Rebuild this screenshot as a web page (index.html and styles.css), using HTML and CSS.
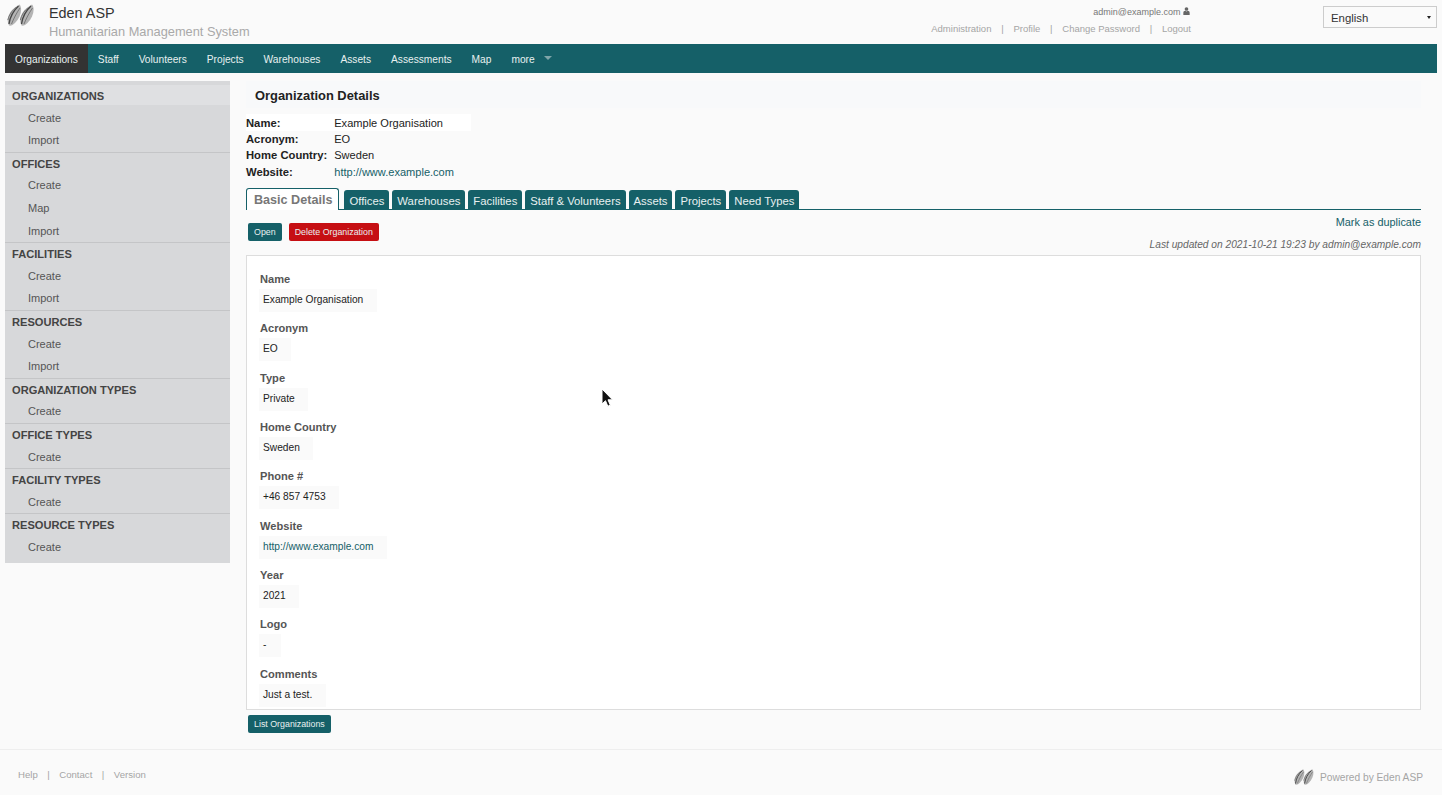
FILE: index.html
```html
<!DOCTYPE html>
<html lang="en">
<head>
    <meta charset="UTF-8">
    <meta name="viewport" content="width=device-width, initial-scale=1.0">
    <title>Eden ASP - Organization Details</title>
    <link rel="stylesheet" href="styles.css">
</head>
<body>
    <svg class="svg-defs" width="0" height="0" aria-hidden="true">
        <symbol id="eden-logo" viewBox="0 0 28 22">
            <g id="eden-leaf">
                <path d="M3 21.500C-.5 15 3 6 13.500 .5C16.500 4 15.500 12 9 19C7 21 5 22 3 21.500z" fill="#b4b4b4"/>
                <path d="M3 20C4 13 7 7 12.500 2" fill="none" stroke="#444" stroke-width="1.300"/>
                <path d="M5.500 20C7.500 15 10.500 9 14 4M1.800 16C3 11 6 6.500 10 3.500" fill="none" stroke="#777" stroke-width="1"/>
            </g>
            <use href="#eden-leaf" x="12.500"/>
        </symbol>
    </svg>

    <header class="top-bar">
        <svg class="logo"><use href="#eden-logo"/></svg>
        <div class="brand">
            <div class="brand-name">Eden ASP</div>
            <div class="brand-sub">Humanitarian Management System</div>
        </div>
        <div class="user-box">
            <div class="user-mail">admin@example.com
                <svg class="user-icon" viewBox="0 0 8 9"><circle cx="4" cy="2.2" r="2.1"/><path d="M0.4 9V6.4C0.4 5 1.5 4.3 2.5 4.2L4 5l1.500-.8c1 .1 2.100.8 2.100 2.200V9z"/></svg>
            </div>
            <div class="user-links">
                <a href="#">Administration</a><span>|</span><a href="#">Profile</a><span>|</span><a href="#">Change Password</a><span>|</span><a href="#">Logout</a>
            </div>
        </div>
        <div class="lang-select">English</div>
    </header>

    <nav class="main-nav">
        <a class="active" href="#">Organizations</a>
        <a href="#">Staff</a>
        <a href="#">Volunteers</a>
        <a href="#">Projects</a>
        <a href="#">Warehouses</a>
        <a href="#">Assets</a>
        <a href="#">Assessments</a>
        <a href="#">Map</a>
        <a class="more" href="#">more</a>
    </nav>

    <div class="page">
        <aside class="side-menu">
            <div class="side-group">
                <div class="side-head current">Organizations</div>
                <a href="#">Create</a>
                <a href="#">Import</a>
            </div>
            <div class="side-group">
                <div class="side-head">Offices</div>
                <a href="#">Create</a>
                <a href="#">Map</a>
                <a href="#">Import</a>
            </div>
            <div class="side-group">
                <div class="side-head">Facilities</div>
                <a href="#">Create</a>
                <a href="#">Import</a>
            </div>
            <div class="side-group">
                <div class="side-head">Resources</div>
                <a href="#">Create</a>
                <a href="#">Import</a>
            </div>
            <div class="side-group">
                <div class="side-head">Organization Types</div>
                <a href="#">Create</a>
            </div>
            <div class="side-group">
                <div class="side-head">Office Types</div>
                <a href="#">Create</a>
            </div>
            <div class="side-group">
                <div class="side-head">Facility Types</div>
                <a href="#">Create</a>
            </div>
            <div class="side-group">
                <div class="side-head">Resource Types</div>
                <a href="#">Create</a>
            </div>
        </aside>

        <main class="content">
            <h2 class="page-title">Organization Details</h2>

            <table class="summary">
                <tr class="first"><th>Name:</th><td>Example Organisation</td></tr>
                <tr><th>Acronym:</th><td>EO</td></tr>
                <tr><th>Home Country:</th><td>Sweden</td></tr>
                <tr><th>Website:</th><td><a href="#">http://www.example.com</a></td></tr>
            </table>

            <div class="tabs">
                <a class="tab active" href="#">Basic Details</a>
                <a class="tab" href="#">Offices</a>
                <a class="tab" href="#">Warehouses</a>
                <a class="tab" href="#">Facilities</a>
                <a class="tab" href="#">Staff &amp; Volunteers</a>
                <a class="tab" href="#">Assets</a>
                <a class="tab" href="#">Projects</a>
                <a class="tab" href="#">Need Types</a>
            </div>

            <div class="actions">
                <div class="action-buttons">
                    <a class="btn" href="#">Open</a>
                    <a class="btn danger" href="#">Delete Organization</a>
                </div>
                <div class="action-meta">
                    <a href="#">Mark as duplicate</a>
                    <em>Last updated on 2021-10-21 19:23 by admin@example.com</em>
                </div>
            </div>

            <section class="record">
                <div class="field"><label>Name</label><div class="value">Example Organisation</div></div>
                <div class="field"><label>Acronym</label><div class="value">EO</div></div>
                <div class="field"><label>Type</label><div class="value">Private</div></div>
                <div class="field"><label>Home Country</label><div class="value">Sweden</div></div>
                <div class="field"><label>Phone #</label><div class="value">+46 857 4753</div></div>
                <div class="field"><label>Website</label><div class="value"><a href="#">http://www.example.com</a></div></div>
                <div class="field"><label>Year</label><div class="value">2021</div></div>
                <div class="field"><label>Logo</label><div class="value">-</div></div>
                <div class="field"><label>Comments</label><div class="value">Just a test.</div></div>
            </section>

            <a class="btn list-btn" href="#">List Organizations</a>
        </main>
    </div>

    <footer class="site-footer">
        <div class="footer-links">
            <a href="#">Help</a><span>|</span><a href="#">Contact</a><span>|</span><a href="#">Version</a>
        </div>
        <div class="powered">
            <svg class="logo-small"><use href="#eden-logo"/></svg>
            <a href="#">Powered by Eden ASP</a>
        </div>
    </footer>

    <svg class="cursor" viewBox="0 0 12 20"><path d="M1 1v15l3.500-3.300 2.300 5.500 2.500-1-2.300-5.400H11.500z" fill="#111" stroke="#fff" stroke-width="1"/></svg>
</body>
</html>
```

FILE: styles.css
```css
* {
    box-sizing: border-box;
}

body {
    margin: 0;
    height: 795px;
    overflow: hidden;
    position: relative;
    background-color: #fafafa;
    color: #222;
    font-family: "Liberation Sans", Arial, sans-serif;
    font-size: 12px;
}

a {
    text-decoration: none;
    color: #156068;
}

.svg-defs {
    display: block;
}

/* top bar */
.top-bar {
    display: flex;
    height: 44px;
    padding: 0 5px 0 6px;
}

.logo {
    width: 28px;
    height: 22px;
    margin-top: 4px;
}

.brand {
    margin-left: 15px;
    width: 300px;
}

.brand-name {
    margin-top: 4px;
    font-size: 14.400px;
    line-height: 18px;
    color: #333;
}

.brand-sub {
    margin-top: 2px;
    font-size: 12.800px;
    line-height: 16px;
    color: #a9a9a9;
}

.user-box {
    margin-left: auto;
    margin-right: 132px;
    text-align: right;
    font-size: 9px;
}

.user-mail {
    margin-top: 6px;
    margin-right: 1px;
    line-height: 12px;
    color: #777;
}

.user-icon {
    width: 7px;
    height: 8px;
    fill: #666;
}

.user-links {
    margin-top: 5px;
    line-height: 12px;
    font-size: 9.500px;
}

.user-links a {
    color: #a5a5a5;
}

.user-links span {
    margin: 0 9.750px;
    color: #a5a5a5;
}

.lang-select {
    position: relative;
    width: 114px;
    height: 22px;
    margin-top: 6px;
    padding-left: 7px;
    border: 1px solid #ccc;
    background-color: #fafafa;
    line-height: 22px;
    font-size: 11.400px;
    color: #333;
}

.lang-select::after {
    content: "";
    position: absolute;
    right: 5px;
    top: 9px;
    border: 2.500px solid transparent;
    border-top: 3px solid #222;
    border-bottom: 0;
}

/* main nav */
.main-nav {
    display: flex;
    height: 29px;
    margin: 0 5px;
    background-color: #156068;
}

.main-nav a {
    padding: 0 10px;
    line-height: 31px;
    font-size: 10.200px;
    color: #e8f0f0;
}

.main-nav a.active {
    background-color: #333;
}

.main-nav a.more::after {
    content: "";
    display: inline-block;
    margin-left: 9px;
    vertical-align: 3px;
    border: 4px solid transparent;
    border-top: 4px solid #7fa5a9;
    border-bottom: 0;
}

/* page columns */
.page {
    display: flex;
    align-items: flex-start;
    padding: 8px 21px 0 5px;
    gap: 16px;
}

.side-menu {
    flex: none;
    width: 225px;
    padding: 4px 0 5px;
    background-color: #d7d8da;
}

.side-group {
    border-bottom: 1px solid #c4c5c7;
}

.side-group:last-child {
    border-bottom: 0;
}

.side-head {
    height: 21.600px;
    padding: 2px 7px 0;
    line-height: 19px;
    font-size: 11.100px;
    font-weight: bold;
    text-transform: uppercase;
    color: #444;
}

.side-head.current {
    height: 20px;
    margin-bottom: 1.600px;
    background-color: #dfe0e2;
}

.side-group a {
    display: block;
    height: 22.600px;
    padding-left: 23px;
    line-height: 22px;
    font-size: 11px;
    color: #555;
}

/* main column */
.content {
    flex: 1;
    min-width: 0;
}

.page-title {
    height: 27px;
    margin: 0;
    padding-left: 9px;
    background-color: #f8f9fa;
    line-height: 29px;
    font-size: 12.900px;
    color: #222;
}

.summary {
    margin-top: 6px;
    border-collapse: collapse;
    font-size: 11.050px;
}

.summary th {
    padding: 0 7px 0 0;
    height: 16.300px;
    text-align: left;
    font-size: 11.250px;
    font-weight: bold;
}

.summary td {
    padding: 0 17px 0 0;
}

.summary .first th,
.summary .first td {
    height: 17px;
    background-color: #fff;
}

/* tabs */
.tabs {
    display: flex;
    align-items: flex-end;
    gap: 3px;
    height: 22px;
    margin-top: 8px;
    border-bottom: 1px solid #156068;
}

.tab {
    height: 19px;
    padding: 0 5px;
    border-radius: 3px 3px 0 0;
    background-color: #156068;
    line-height: 23px;
    font-size: 11.300px;
    color: #e8f0f0;
}

.tab.active {
    height: 22px;
    margin-right: 2px;
    margin-bottom: -1px;
    padding: 0 6px 0 7px;
    border: 1px solid #156068;
    border-bottom: 0;
    background-color: #fff;
    line-height: 22px;
    font-size: 12.600px;
    font-weight: bold;
    color: #777;
}

/* actions */
.actions {
    display: flex;
    justify-content: space-between;
    height: 45px;
}

.action-buttons {
    display: flex;
    gap: 7px;
    padding: 13px 0 0 2px;
}

.btn {
    display: inline-block;
    height: 18px;
    padding: 0 6px;
    border-radius: 2px;
    background-color: #156068;
    line-height: 18px;
    font-size: 8.850px;
    color: #e8f0f0;
}

.btn.danger {
    background-color: #c60f13;
}

.action-meta {
    display: flex;
    flex-direction: column;
    align-items: flex-end;
    padding-top: 5px;
    font-size: 10.900px;
}

.action-meta a {
    line-height: 14px;
}

.action-meta em {
    margin-top: 9px;
    line-height: 14px;
    color: #666;
    font-size: 10.200px;
}

.record {
    height: 455px;
    padding: 16px 12px 0;
    border: 1px solid #ddd;
    background-color: #fff;
}

.field {
    height: 49.350px;
}

.field label {
    display: block;
    height: 17px;
    margin-left: 1px;
    line-height: 14px;
    font-size: 11.100px;
    font-weight: bold;
    color: #555;
}

.value {
    display: table;
    min-width: 22px;
    height: 23px;
    padding: 0 13.500px 0 4px;
    background-color: #fafafa;
    line-height: 22px;
    font-size: 10.200px;
    color: #222;
}

.list-btn {
    margin: 5px 0 0 2px;
}

/* footer */
.site-footer {
    position: absolute;
    left: 0;
    right: 0;
    top: 749px;
    height: 46px;
    display: flex;
    justify-content: space-between;
    border-top: 1px solid #eee;
    padding: 0 19px 0 18px;
}

.footer-links {
    margin-top: 19px;
    line-height: 12px;
    font-size: 9.600px;
}

.footer-links a {
    color: #a5a5a5;
}

.footer-links span {
    margin: 0 9.500px;
    color: #a5a5a5;
}

.powered {
    display: flex;
    align-items: center;
    gap: 6px;
    height: 16px;
    margin-top: 19px;
}

.powered a {
    font-size: 10.200px;
    color: #a5a5a5;
}

.logo-small {
    width: 21px;
    height: 16px;
}

.cursor {
    position: absolute;
    left: 601px;
    top: 388px;
    width: 12px;
    height: 20px;
}
```
